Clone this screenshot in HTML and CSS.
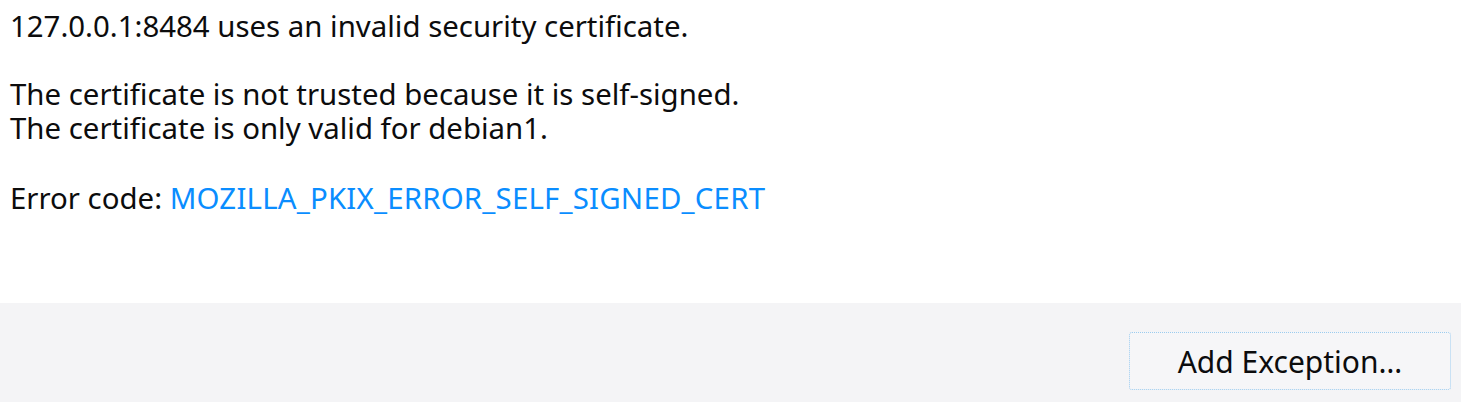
FILE: index.html
```html
<!DOCTYPE html>
<html>
<head>
<meta charset="utf-8">
<link rel="stylesheet" href="styles.css">
</head>
<body>
<div class="page">
  <div class="content">
    <p class="para">127.0.0.1:8484 uses an invalid security certificate.</p>
    <p class="para para-wide">The certificate is not trusted because it is self-signed.<br>The certificate is only valid for debian1.</p>
    <p class="para">Error code: <a class="code">MOZILLA_PKIX_ERROR_SELF_SIGNED_CERT</a></p>
  </div>
  <div class="footer">
    <button class="btn">Add Exception…</button>
  </div>
</div>
</body>
</html>
```
FILE: styles.css
```css
html, body {
  margin: 0;
  padding: 0;
  background: #ffffff;
}
.page {
  display: flex;
  flex-direction: column;
  height: 402px;
  font-family: "Noto Sans", "Open Sans", sans-serif;
  color: #0c0c0d;
}
.content {
  height: 303px;
  padding: 9px 10px 0 10px;
  box-sizing: border-box;
}
.para {
  margin: 0 0 34px 0;
  font-size: 29.4px;
  line-height: 34px;
}
.para-wide {
  margin-bottom: 36px;
}
.code {
  color: #0a8dff;
  text-decoration: none;
  letter-spacing: 0.2px;
}
.footer {
  flex: 1;
  background: #f4f4f6;
  display: flex;
  justify-content: flex-end;
  align-items: flex-start;
  padding: 29px 10px 0 0;
}
.btn {
  width: 322px;
  height: 58px;
  background: #f6f6f8;
  border: 1px dotted #9cccef;
  border-radius: 3px;
  font-family: "Noto Sans", "Open Sans", sans-serif;
  font-size: 30px;
  color: #0c0c0d;
  padding: 0;
}
```
